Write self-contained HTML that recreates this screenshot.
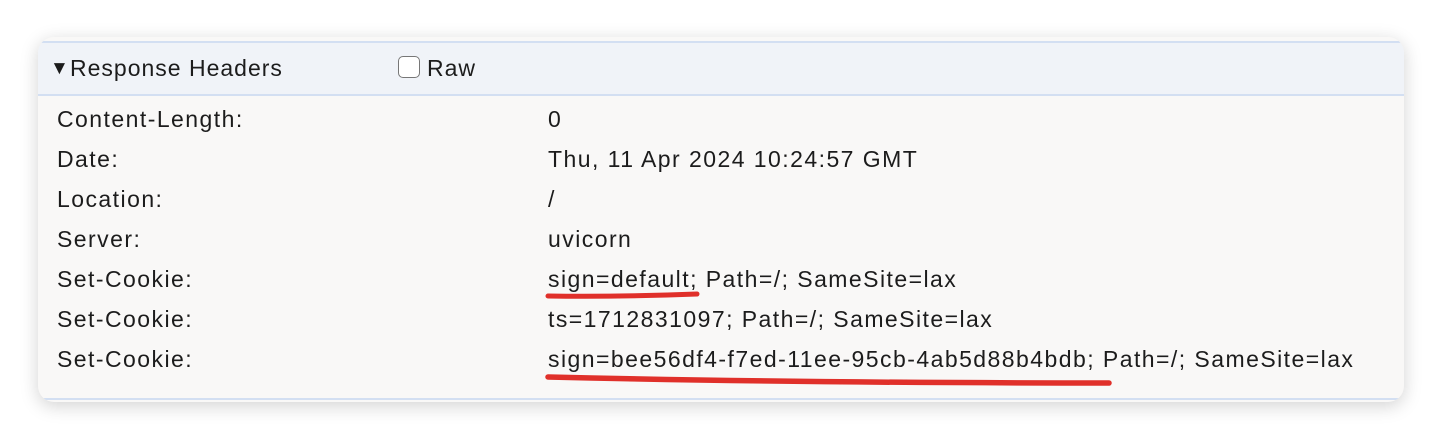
<!DOCTYPE html>
<html><head><style>
body{margin:0;width:1440px;height:438px;background:#fff;font-family:"Liberation Sans",sans-serif;position:relative;overflow:hidden}
.card{position:absolute;left:38px;top:37px;width:1366px;height:365px;border-radius:16px;background:#f9f8f7;box-shadow:0 4px 18px rgba(0,0,0,0.18);overflow:hidden}
.hdr{position:absolute;left:0;top:4px;width:100%;height:51px;background:#f0f3f8;border-top:2px solid #d3dff2;border-bottom:2px solid #d3dff2}
.bot{position:absolute;left:0;top:361px;width:100%;height:2px;background:#d3dff2}
.t{position:absolute;font-size:23px;letter-spacing:1.45px;color:#1c1c1c;white-space:nowrap;line-height:26px}
.cb{position:absolute;left:360px;top:13px;width:20px;height:20px;border:1.5px solid #777;border-radius:5px;background:#fff}
</style></head><body>
<div class="card">
<div class="hdr"><div class="cb"></div></div>
<div class="t" style="left:12px;top:19px;font-size:19px;letter-spacing:0">▼</div>
<div class="t" style="left:32px;top:18px;letter-spacing:1px">Response Headers</div>
<div class="t" style="left:389px;top:18px;letter-spacing:1px">Raw</div>
<div class="t" style="left:19px;top:69px">Content-Length:</div><div class="t" style="left:510px;top:69px">0</div>
<div class="t" style="left:19px;top:109px">Date:</div><div class="t" style="left:510px;top:109px">Thu, 11 Apr 2024 10:24:57 GMT</div>
<div class="t" style="left:19px;top:149px">Location:</div><div class="t" style="left:510px;top:149px">/</div>
<div class="t" style="left:19px;top:189px">Server:</div><div class="t" style="left:510px;top:189px">uvicorn</div>
<div class="t" style="left:19px;top:229px">Set-Cookie:</div><div class="t" style="left:510px;top:229px">sign=default; Path=/; SameSite=lax</div>
<div class="t" style="left:19px;top:269px">Set-Cookie:</div><div class="t" style="left:510px;top:269px">ts=1712831097; Path=/; SameSite=lax</div>
<div class="t" style="left:19px;top:309px">Set-Cookie:</div><div class="t" style="left:510px;top:309px">sign=bee56df4-f7ed-11ee-95cb-4ab5d88b4bdb; Path=/; SameSite=lax</div>
<div class="bot"></div>
</div>
<svg style="position:absolute;left:0;top:0" width="1440" height="438">
<path d="M548 296 Q620 297 697 294" stroke="#e0302a" stroke-width="5" fill="none" stroke-linecap="round"/>
<path d="M548 377 Q800 383 1109 383" stroke="#e0302a" stroke-width="5.5" fill="none" stroke-linecap="round"/>
</svg>
</body></html>
